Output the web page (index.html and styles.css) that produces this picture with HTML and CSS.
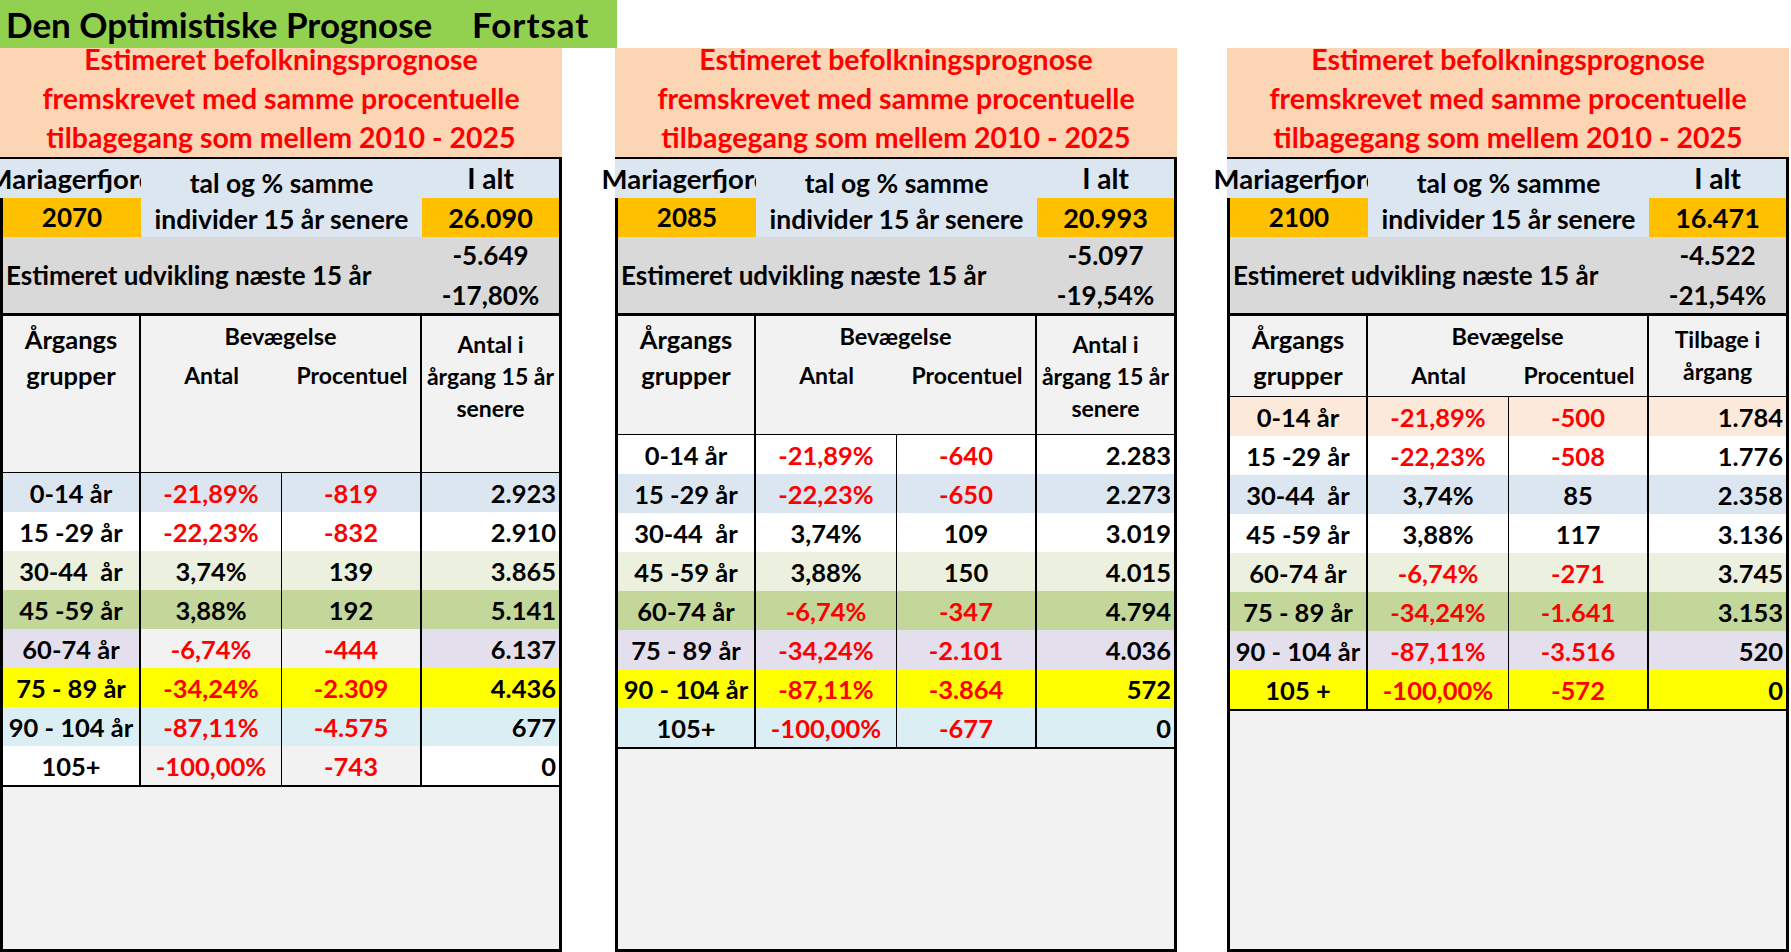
FILE: index.html
```html
<!DOCTYPE html>
<html lang="da">
<head>
<meta charset="utf-8">
<title>Den Optimistiske Prognose Fortsat</title>
<link rel="stylesheet" href="styles.css">
</head>
<body>
<div class="page">
  <div class="title"><span class="title-a">Den Optimistiske Prognose</span><span class="title-b">Fortsat</span></div>
  <div class="panels">

    <!-- Panel 1 -->
    <section class="panel">
      <div class="banner"><div>Estimeret befolkningsprognose</div><div>fremskrevet med samme procentuelle</div><div>tilbagegang som mellem 2010 - 2025</div></div>
      <div class="sheet">
        <div class="top">
          <div class="c name blue"><span>Mariagerfjord</span></div>
          <div class="c mid blue"><div>tal og % samme</div><div>individer 15 år senere</div></div>
          <div class="c ialt blue">I alt</div>
          <div class="c year orange">2070</div>
          <div class="c total orange">26.090</div>
          <div class="c dev grey">Estimeret udvikling næste 15 år</div>
          <div class="c chg grey"><div>-5.649</div><div>-17,80%</div></div>
        </div>
        <div class="head h-tall">
          <div class="hc h1"><div>Årgangs</div><div>grupper</div></div>
          <div class="hc h2"><div class="bev">Bevægelse</div><div class="sub"><span>Antal</span><span>Procentuel</span></div></div>
          <div class="hc h4 h4-3"><div>Antal i</div><div>årgang 15 år</div><div>senere</div></div>
        </div>
        <div class="rows">
          <div class="row"><div class="d blue">0-14 år</div><div class="d blue neg">-21,89%</div><div class="d blue neg">-819</div><div class="d r blue">2.923</div></div>
          <div class="row"><div class="d white">15 -29 år</div><div class="d white neg">-22,23%</div><div class="d white neg">-832</div><div class="d r white">2.910</div></div>
          <div class="row"><div class="d lgreen">30-44&nbsp; år</div><div class="d lgreen">3,74%</div><div class="d lgreen">139</div><div class="d r lgreen">3.865</div></div>
          <div class="row"><div class="d green">45 -59 år</div><div class="d green">3,88%</div><div class="d green">192</div><div class="d r green">5.141</div></div>
          <div class="row"><div class="d lav">60-74 år</div><div class="d lgrey neg">-6,74%</div><div class="d lgrey neg">-444</div><div class="d r lav">6.137</div></div>
          <div class="row"><div class="d yellow">75 - 89 år</div><div class="d yellow neg">-34,24%</div><div class="d yellow neg">-2.309</div><div class="d r yellow">4.436</div></div>
          <div class="row"><div class="d cyan">90 - 104 år</div><div class="d cyan neg">-87,11%</div><div class="d cyan neg">-4.575</div><div class="d r cyan">677</div></div>
          <div class="row last"><div class="d white">105+</div><div class="d lgrey neg">-100,00%</div><div class="d lgrey neg">-743</div><div class="d r white">0</div></div>
        </div>
        <div class="empty"></div>
      </div>
    </section>

    <!-- Panel 2 -->
    <section class="panel p2">
      <div class="banner"><div>Estimeret befolkningsprognose</div><div>fremskrevet med samme procentuelle</div><div>tilbagegang som mellem 2010 - 2025</div></div>
      <div class="sheet">
        <div class="top">
          <div class="c name blue"><span>Mariagerfjord</span></div>
          <div class="c mid blue"><div>tal og % samme</div><div>individer 15 år senere</div></div>
          <div class="c ialt blue">I alt</div>
          <div class="c year orange">2085</div>
          <div class="c total orange">20.993</div>
          <div class="c dev grey">Estimeret udvikling næste 15 år</div>
          <div class="c chg grey"><div>-5.097</div><div>-19,54%</div></div>
        </div>
        <div class="head h-mid">
          <div class="hc h1"><div>Årgangs</div><div>grupper</div></div>
          <div class="hc h2"><div class="bev">Bevægelse</div><div class="sub"><span>Antal</span><span>Procentuel</span></div></div>
          <div class="hc h4 h4-3"><div>Antal i</div><div>årgang 15 år</div><div>senere</div></div>
        </div>
        <div class="rows">
          <div class="row"><div class="d white">0-14 år</div><div class="d white neg">-21,89%</div><div class="d white neg">-640</div><div class="d r white">2.283</div></div>
          <div class="row"><div class="d blue">15 -29 år</div><div class="d blue neg">-22,23%</div><div class="d blue neg">-650</div><div class="d r blue">2.273</div></div>
          <div class="row"><div class="d white">30-44&nbsp; år</div><div class="d white">3,74%</div><div class="d white">109</div><div class="d r white">3.019</div></div>
          <div class="row"><div class="d lgreen">45 -59 år</div><div class="d lgreen">3,88%</div><div class="d lgreen">150</div><div class="d r lgreen">4.015</div></div>
          <div class="row"><div class="d green">60-74 år</div><div class="d green neg">-6,74%</div><div class="d green neg">-347</div><div class="d r green">4.794</div></div>
          <div class="row"><div class="d lav">75 - 89 år</div><div class="d lav neg">-34,24%</div><div class="d lav neg">-2.101</div><div class="d r lav">4.036</div></div>
          <div class="row"><div class="d yellow">90 - 104 år</div><div class="d yellow neg">-87,11%</div><div class="d yellow neg">-3.864</div><div class="d r yellow">572</div></div>
          <div class="row last"><div class="d cyan">105+</div><div class="d cyan neg">-100,00%</div><div class="d cyan neg">-677</div><div class="d r cyan">0</div></div>
        </div>
        <div class="empty"></div>
      </div>
    </section>

    <!-- Panel 3 -->
    <section class="panel p3">
      <div class="banner"><div>Estimeret befolkningsprognose</div><div>fremskrevet med samme procentuelle</div><div>tilbagegang som mellem 2010 - 2025</div></div>
      <div class="sheet">
        <div class="top">
          <div class="c name blue"><span>Mariagerfjord</span></div>
          <div class="c mid blue"><div>tal og % samme</div><div>individer 15 år senere</div></div>
          <div class="c ialt blue">I alt</div>
          <div class="c year orange">2100</div>
          <div class="c total orange">16.471</div>
          <div class="c dev grey">Estimeret udvikling næste 15 år</div>
          <div class="c chg grey"><div>-4.522</div><div>-21,54%</div></div>
        </div>
        <div class="head h-short">
          <div class="hc h1"><div>Årgangs</div><div>grupper</div></div>
          <div class="hc h2"><div class="bev">Bevægelse</div><div class="sub"><span>Antal</span><span>Procentuel</span></div></div>
          <div class="hc h4 h4-2"><div>Tilbage i</div><div>årgang</div></div>
        </div>
        <div class="rows">
          <div class="row"><div class="d peach">0-14 år</div><div class="d peach neg">-21,89%</div><div class="d peach neg">-500</div><div class="d r peach">1.784</div></div>
          <div class="row"><div class="d white">15 -29 år</div><div class="d white neg">-22,23%</div><div class="d white neg">-508</div><div class="d r white">1.776</div></div>
          <div class="row"><div class="d blue">30-44&nbsp; år</div><div class="d blue">3,74%</div><div class="d blue">85</div><div class="d r blue">2.358</div></div>
          <div class="row"><div class="d white">45 -59 år</div><div class="d white">3,88%</div><div class="d white">117</div><div class="d r white">3.136</div></div>
          <div class="row"><div class="d lgreen">60-74 år</div><div class="d lgreen neg">-6,74%</div><div class="d lgreen neg">-271</div><div class="d r lgreen">3.745</div></div>
          <div class="row"><div class="d green">75 - 89 år</div><div class="d green neg">-34,24%</div><div class="d green neg">-1.641</div><div class="d r green">3.153</div></div>
          <div class="row"><div class="d lav">90 - 104 år</div><div class="d lav neg">-87,11%</div><div class="d lav neg">-3.516</div><div class="d r lav">520</div></div>
          <div class="row last"><div class="d yellow">105 +</div><div class="d yellow neg">-100,00%</div><div class="d yellow neg">-572</div><div class="d r yellow">0</div></div>
        </div>
        <div class="empty"></div>
      </div>
    </section>

  </div>
</div>
</body>
</html>
```

FILE: styles.css
```css
* { box-sizing: border-box; }
html, body { margin: 0; padding: 0; background: #ffffff; }
body {
  font-family: Lato, "Noto Sans", "Liberation Sans", sans-serif;
  color: #000;
  width: 1791px;
  height: 952px;
  overflow: hidden;
}
.page { width: 1791px; height: 952px; display: flex; flex-direction: column; }

.title {
  width: 617px;
  height: 48px;
  background: #92d050;
  font-size: 35px;
  font-weight: 700;
  line-height: 48px;
  padding-left: 6px;
  white-space: nowrap;
  display: flex;
}
.title-a { width: 466px; flex-shrink: 0; }
.title-b { letter-spacing: 1px; }

.panels { display: flex; flex: 1; min-height: 0; }
.panel { width: 562px; display: flex; flex-direction: column; }
.p2 { margin-left: 53px; }
.p3 { margin-left: 50px; }

.banner {
  height: 109px;
  background: #fcd5b4;
  color: #ff0000;
  font-weight: 700;
  font-size: 28.5px;
  line-height: 39px;
  text-align: center;
  display: flex;
  flex-direction: column;
  justify-content: flex-end;
  white-space: nowrap;
}

.sheet {
  flex: 1;
  border: 3px solid #000;
  border-top-width: 2px;
  background: #f2f2f2;
  display: flex;
  flex-direction: column;
  font-weight: 700;
  font-size: 25.5px;
}

.blue { background: #dce6f1; }
.orange { background: #ffc000; }
.grey { background: #d9d9d9; }
.white { background: #ffffff; }
.lgreen { background: #ebf1de; }
.green { background: #c4d79b; }
.lav { background: #e4dfec; }
.lgrey { background: #f2f2f2; }
.yellow { background: #ffff00; }
.cyan { background: #daeef3; }
.peach { background: #fde9d9; }
.neg { color: #ff0000; }

.top {
  display: grid;
  grid-template-columns: 138px 281px 137px;
  grid-template-rows: 39px 39px 76px;
  border-bottom: 3px solid #000;
  font-size: 26px;
}
.c { white-space: nowrap; }
.name {
  grid-column: 1; grid-row: 1;
  margin-left: -3px;
  display: flex;
  justify-content: center;
  line-height: 39px;
  font-size: 27.5px;
  clip-path: inset(0 0 0 -60px);
}
.mid {
  grid-column: 2; grid-row: 1 / span 2;
  display: flex; flex-direction: column; justify-content: flex-end;
  text-align: center;
  line-height: 36px;
  font-size: 26.5px;
}
.ialt { grid-column: 3; grid-row: 1; text-align: center; line-height: 39px; font-size: 28px; }
.year { grid-column: 1; grid-row: 2; text-align: center; line-height: 39px; }
.total { grid-column: 3; grid-row: 2; text-align: center; line-height: 39px; font-size: 27px; }
.dev {
  grid-column: 1 / span 2; grid-row: 3;
  display: flex; align-items: center;
  padding-left: 3px;
  line-height: 39px;
}
.chg {
  grid-column: 3; grid-row: 3;
  display: flex; flex-direction: column; justify-content: center;
  text-align: center;
  line-height: 40px;
}

.head {
  display: grid;
  grid-template-columns: 138px 281px 137px;
  border-bottom: 1px solid #000;
  background: #f2f2f2;
  font-size: 23px;
}
.h-tall { height: 157px; }
.h-mid { height: 119px; }
.h-short { height: 81px; }
.hc { text-align: center; white-space: nowrap; }
.h1 { border-right: 2px solid #000; padding-top: 5px; line-height: 36px; font-size: 25.5px; }
.h2 { border-right: 2px solid #000; }
.bev { padding-top: 1px; line-height: 38px; font-size: 23.5px; }
.sub { display: grid; grid-template-columns: 141px 140px; line-height: 40px; }
.h4 { line-height: 32px; }
.h4-3 { padding-top: 12px; }
.h4-2 { padding-top: 7px; }

.rows { display: flex; flex-direction: column; }
.row {
  display: grid;
  grid-template-columns: 138px 141px 140px 137px;
  height: 39px;
  border-bottom: 1px solid #000;
}
.row.last { height: 41px; border-bottom: 3px solid #000; }
.d {
  text-align: center;
  line-height: 38px;
  white-space: nowrap;
  padding-top: 1px;
}
.d:nth-child(1) { border-right: 2px solid #000; }
.d:nth-child(2) { border-right: 1px solid #000; }
.d:nth-child(3) { border-right: 2px solid #000; }
.d.r { text-align: right; padding-right: 3px; }

.empty { flex: 1; background: #f2f2f2; }
```
